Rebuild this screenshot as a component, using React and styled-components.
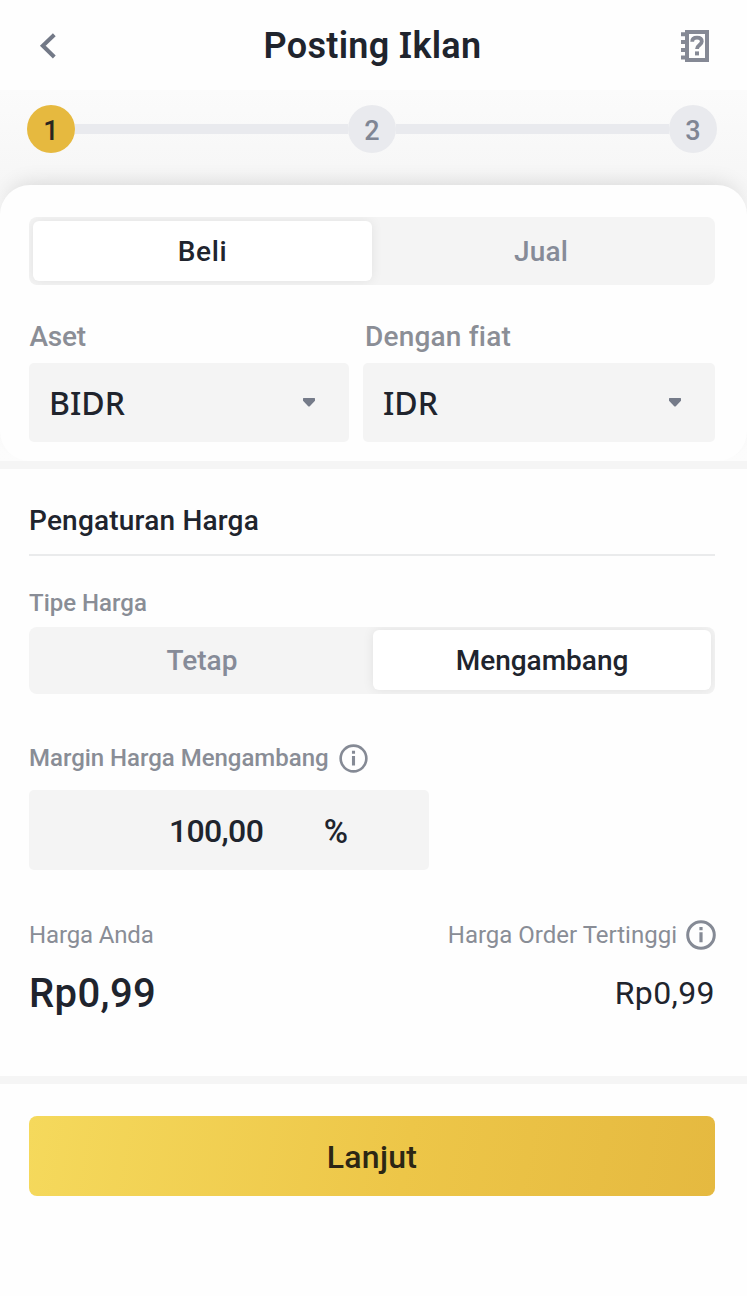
import React from 'react';
import styled, { createGlobalStyle } from 'styled-components';

const ink = '#20242d';
const muted = '#868b98';
const field = '#f4f4f4';

const GlobalStyle = createGlobalStyle`
  * { box-sizing: border-box; }
  body {
    margin: 0;
    background: #fefefe;
    color: ${ink};
    font-family: Roboto, 'Liberation Sans', sans-serif;
  }
  button, input { font: inherit; color: inherit; border: 0; margin: 0; padding: 0; }
`;

const Screen = styled.div`
  width: 747px;
  height: 1296px;
  overflow: hidden;
`;

const Header = styled.header`
  display: flex;
  align-items: center;
  justify-content: space-between;
  height: 90px;
  padding: 2px 37px 0 39px;
`;

const IconButton = styled.button`
  display: flex;
  width: 30px;
  background: none;
  justify-content: ${(p) => p.$align || 'flex-start'};
`;

const Title = styled.h1`
  margin: -1px 4px 0 0;
  font-size: 36px;
  line-height: 44px;
  font-weight: 600;
  letter-spacing: 0.3px;
`;

const SerifCapital = styled.span`
  font-family: 'Noto Sans', sans-serif;
`;

const TopArea = styled.section`
  background: linear-gradient(#fbfbfb, #f6f6f6 95px, #f8f8f8 130px, #fcfcfc);
  overflow: hidden;
`;

const Stepper = styled.ol`
  list-style: none;
  display: flex;
  align-items: center;
  height: 95px;
  margin: 0;
  padding: 0 30px 17px 27px;
`;

const Step = styled.li`
  display: flex;
  align-items: center;
  justify-content: center;
  width: 48px;
  height: 48px;
  padding-top: 3px;
  border-radius: 50%;
  font-size: 27px;
  font-weight: 500;
  background: ${(p) => (p.$active ? '#e6b93f' : '#e9eaee')};
  color: ${(p) => (p.$active ? '#2a2620' : '#808694')};
`;

const Track = styled.li`
  flex: 1;
  height: 10px;
  background: #e9eaee;
`;

const Card = styled.div`
  height: 276px;
  padding: 32px 32px 19px 29px;
  border-radius: 30px;
  background: #fefefe;
  box-shadow: 0 -10px 22px -10px rgba(0, 0, 0, 0.14);
`;

const Segmented = styled.div`
  display: grid;
  grid-template-columns: 1fr 1fr;
  column-gap: 2px;
  height: ${(p) => p.$height}px;
  padding: ${(p) => p.$inset || 3}px ${(p) => p.$end || 4}px 4px 4px;
  border-radius: 8px;
  background: ${field};
  overflow: hidden;
`;

const Segment = styled.button`
  padding-right: ${(p) => p.$nudge || 0}px;
  border-radius: 6px;
  font-size: 28px;
  font-weight: 500;
  letter-spacing: ${(p) => p.$track || 0}px;
  color: ${(p) => (p.$active ? ink : muted)};
  background: ${(p) => (p.$active ? '#fff' : 'transparent')};
  box-shadow: ${(p) => (p.$active ? '0 0 12px rgba(0, 0, 0, 0.08)' : 'none')};
`;

const SelectRow = styled.div`
  display: grid;
  grid-template-columns: 320px 352px;
  column-gap: 14px;
  margin-top: 35px;
`;

const SelectLabel = styled.div`
  height: 43px;
  padding-left: ${(p) => p.$indent || 0}px;
  font-size: 28px;
  font-weight: 500;
  line-height: 34px;
  letter-spacing: ${(p) => p.$track || 0}px;
  color: #8b8e96;
`;

const Select = styled.button`
  display: flex;
  align-items: center;
  justify-content: space-between;
  width: 100%;
  height: 79px;
  padding: 0 34px 1px 20px;
  border-radius: 5px;
  background: ${field};
  font-family: 'Noto Sans', sans-serif;
  font-size: 32px;
  font-weight: 500;
`;

const Band = styled.div`
  height: 8px;
  background: #f5f5f5;
`;

const Settings = styled.section`
  height: 607px;
  padding: 0 32px 0 29px;
`;

const SectionTitle = styled.h2`
  height: 87px;
  margin: 0;
  padding: 35px 0 0 0;
  border-bottom: 2px solid #eaebec;
  font-size: 28px;
  font-weight: 500;
  line-height: 34px;
  letter-spacing: 0.2px;
`;

const FieldLabel = styled.div`
  display: flex;
  align-items: center;
  gap: ${(p) => p.$gap || 11}px;
  height: 30px;
  margin-top: ${(p) => p.$top || 0}px;
  font-size: 24px;
  font-weight: ${(p) => p.$weight || 500};
  letter-spacing: ${(p) => p.$track || 0}px;
  color: #898d96;
`;

const SegmentSpace = styled.div`
  margin-top: 9px;
`;

const MarginInput = styled.div`
  display: flex;
  align-items: center;
  justify-content: space-between;
  width: 400px;
  height: 80px;
  margin-top: 17px;
  padding: 2px 81px 0 140px;
  border-radius: 5px;
  background: ${field};
  font-size: 32px;
  font-weight: 500;
`;

const Amount = styled.span`
  letter-spacing: -0.65px;
`;

const Percent = styled.span`
  font-size: 33px;
`;

const PriceRow = styled.div`
  display: flex;
  justify-content: space-between;
  margin-top: 50px;
`;

const PriceColumn = styled.div`
  display: flex;
  flex-direction: column;
  align-items: ${(p) => (p.$end ? 'flex-end' : 'flex-start')};
  margin-right: ${(p) => (p.$end ? -1 : 0)}px;
`;

const Price = styled.div`
  margin-top: ${(p) => (p.$strong ? 20 : 19)}px;
  padding-right: ${(p) => (p.$strong ? 0 : 1)}px;
  line-height: 48px;
  font-size: ${(p) => (p.$strong ? 40 : 32)}px;
  font-weight: ${(p) => (p.$strong ? 500 : 400)};
  letter-spacing: 0.4px;
`;

const Footer = styled.footer`
  padding: 32px 32px 0 29px;
`;

const Submit = styled.button`
  width: 100%;
  height: 80px;
  padding-top: 2px;
  border-radius: 8px;
  background: linear-gradient(100deg, #f5d95c, #edc648 55%, #e5b940);
  color: #2c2614;
  font-size: 32px;
  font-weight: 500;
  letter-spacing: 0.3px;
`;

const BackIcon = () => (
  <svg width="18" height="26" viewBox="0 0 18 26" fill="none" stroke="#737987" strokeWidth="4">
    <path d="M15.3 1.7 3.8 12.7 15.3 24" />
  </svg>
);

const GuideIcon = () => (
  <svg width="30" height="34" viewBox="0 0 30 34" fill="none">
    <path d="M7 3H27V31H7z" stroke="#858995" strokeWidth="4" />
    <path d="M1 5.2h5M1 13h5M1 21h5M1 28.6h5" stroke="#858995" strokeWidth="4" />
    <path d="M12.2 12.7c0-2.5 1.8-4 4.8-4s4.8 1.4 4.8 3.9c0 3.4-4.8 3.6-4.8 7.4" stroke="#858995" strokeWidth="3.8" />
    <path d="M15 22.4h4v4h-4z" fill="#858995" />
  </svg>
);

const Caret = () => (
  <svg width="12" height="9" viewBox="0 0 12 9">
    <path d="M.6 0h10.8a.6.6 0 0 1 .6.6v2.2L6.8 8.2q-.8.8-1.6 0L0 2.8V.6A.6.6 0 0 1 .6 0z" fill="#757b89" />
  </svg>
);

const InfoIcon = ({ size, weight }) => (
  <svg width={size} height={size} viewBox="0 0 30 30" fill="none" stroke="#858a95">
    <circle cx="15" cy="15" r="13.3" strokeWidth={weight} />
    <path d="M15 12.3v10M15 7v3.2" strokeWidth="3.2" />
  </svg>
);

export default function App() {
  return (
    <Screen>
      <GlobalStyle />
      <Header>
        <IconButton aria-label="Kembali"><BackIcon /></IconButton>
        <Title>Posting <SerifCapital>I</SerifCapital>klan</Title>
        <IconButton aria-label="Panduan" $align="flex-end"><GuideIcon /></IconButton>
      </Header>

      <TopArea>
        <Stepper>
          <Step $active>1</Step>
          <Track />
          <Step>2</Step>
          <Track />
          <Step>3</Step>
        </Stepper>
        <Card>
          <Segmented $height={68} $inset={4} $end={2}>
            <Segment $active $track={0.6}>Beli</Segment>
            <Segment $track={0.1} $nudge={5}>Jual</Segment>
          </Segmented>
          <SelectRow>
            <div>
              <SelectLabel $track={-0.2} $indent={0.5}>Aset</SelectLabel>
              <Select>BIDR<Caret /></Select>
            </div>
            <div>
              <SelectLabel $indent={2} $track={0.2}>Dengan fiat</SelectLabel>
              <Select>IDR<Caret /></Select>
            </div>
          </SelectRow>
        </Card>
      </TopArea>
      <Band />

      <Settings>
        <SectionTitle>Pengaturan Harga</SectionTitle>
        <FieldLabel $top={32}>Tipe Harga</FieldLabel>
        <SegmentSpace>
          <Segmented $height={67}>
            <Segment>Tetap</Segment>
            <Segment $active>Mengambang</Segment>
          </Segmented>
        </SegmentSpace>
        <FieldLabel $top={49} $gap={10} $track={-0.02}>
          Margin Harga Mengambang <InfoIcon size={29} weight={2.7} />
        </FieldLabel>
        <MarginInput>
          <Amount>100,00</Amount>
          <Percent>%</Percent>
        </MarginInput>
        <PriceRow>
          <PriceColumn>
            <FieldLabel $weight={400} $track={-0.15}>Harga Anda</FieldLabel>
            <Price $strong>Rp0,99</Price>
          </PriceColumn>
          <PriceColumn $end>
            <FieldLabel $weight={400} $gap={9}>
              Harga Order Tertinggi <InfoIcon size={30} weight={3} />
            </FieldLabel>
            <Price>Rp0,99</Price>
          </PriceColumn>
        </PriceRow>
      </Settings>
      <Band />

      <Footer>
        <Submit>Lanjut</Submit>
      </Footer>
    </Screen>
  );
}
